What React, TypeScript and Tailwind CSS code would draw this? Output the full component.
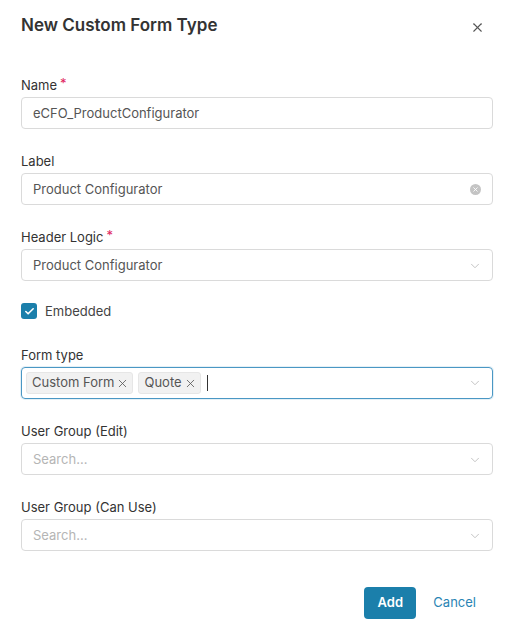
import { ChevronDown, X, Check } from "lucide-react";

const font = { fontFamily: "Inter, 'Noto Sans', sans-serif" };

function Label({ text, required }: { text: string; required?: boolean }) {
  return (
    <div className="h-5 text-[13px] leading-5 text-[#333] mb-[2px]">
      {text}
      {required && <span className="text-[#e0245e] ml-[3px] relative -top-[2px]">*</span>}
    </div>
  );
}

function Chevron() {
  return <ChevronDown className="w-[14px] h-[14px] text-[#bbb]" strokeWidth={1.5} />;
}

function Tag({ text }: { text: string }) {
  return (
    <span className="inline-flex items-center h-[22px] pl-[5px] pr-[3px] gap-[2px] bg-[#f1f1f1] border border-[#e6e6e6] rounded-[3px] text-[13px] text-[#555]">
      {text}
      <X className="w-[13px] h-[13px] text-[#555]" strokeWidth={1.5} />
    </span>
  );
}

export default function App() {
  return (
    <div style={font} className="w-[513px] h-[637px] bg-white pl-[21px] pr-[20px] pt-[15px]">
      <div className="flex items-center justify-between h-[22px]">
        <h1 className="text-[17px] font-semibold text-[#333]">New Custom Form Type</h1>
        <X className="w-[15px] h-[15px] text-[#555] mr-[8px] mt-[2px]" strokeWidth={1.7} />
      </div>

      <div className="mt-[38px]">
        <Label text="Name" required />
        <div className="h-8 border border-[#dadada] rounded-[4px] px-[11px] pt-[1px] flex items-center text-[13px] text-[#555]">
          eCFO_ProductConfigurator
        </div>
      </div>

      <div className="mt-[22px]">
        <Label text="Label" />
        <div className="h-8 border border-[#dadada] rounded-[4px] pl-[11px] pr-[11px] pt-[1px] flex items-center justify-between text-[13px] text-[#555]">
          <span>Product Configurator</span>
          <span className="w-[11px] h-[11px] rounded-full bg-[#c4c4c4] flex items-center justify-center">
            <X className="w-[7px] h-[7px] text-white" strokeWidth={3} />
          </span>
        </div>
      </div>

      <div className="mt-[22px]">
        <Label text="Header Logic" required />
        <div className="h-8 border border-[#dadada] rounded-[4px] pl-[11px] pr-[10px] pt-[1px] flex items-center justify-between text-[13px] text-[#555]">
          <span>Product Configurator</span>
          <Chevron />
        </div>
      </div>

      <div className="mt-[22px] flex items-center gap-[8px] h-4">
        <span className="w-4 h-4 rounded-[3px] bg-[#1b7fab] flex items-center justify-center">
          <Check className="w-[11px] h-[11px] text-white" strokeWidth={3.5} />
        </span>
        <span className="text-[13px] text-[#444] pt-[1px]">Embedded</span>
      </div>

      <div className="mt-[26px]">
        <Label text="Form type" />
        <div className="h-8 border border-[#4a97c4] rounded-[4px] pl-[4px] pr-[10px] flex items-center justify-between shadow-[0_0_0_1px_rgba(74,151,196,0.15)]">
          <div className="flex items-center gap-[5px]">
            <Tag text="Custom Form" />
            <Tag text="Quote" />
            <span className="w-px h-[16px] bg-[#333] ml-[1px]" />
          </div>
          <Chevron />
        </div>
      </div>

      <div className="mt-[22px]">
        <Label text="User Group (Edit)" />
        <div className="h-8 border border-[#dadada] rounded-[4px] pl-[11px] pr-[10px] pt-[1px] flex items-center justify-between text-[13px] text-[#b5b5b5]">
          <span>Search...</span>
          <Chevron />
        </div>
      </div>

      <div className="mt-[22px]">
        <Label text="User Group (Can Use)" />
        <div className="h-8 border border-[#dadada] rounded-[4px] pl-[11px] pr-[10px] pt-[1px] flex items-center justify-between text-[13px] text-[#b5b5b5]">
          <span>Search...</span>
          <Chevron />
        </div>
      </div>

      <div className="mt-[36px] flex justify-end items-center gap-[17px] pr-[17px]">
        <button className="h-8 w-[52px] rounded-[4px] bg-[#1b7fab] text-white text-[13px] font-semibold">
          Add
        </button>
        <button className="text-[13px] text-[#2a84b4]">Cancel</button>
      </div>
    </div>
  );
}
